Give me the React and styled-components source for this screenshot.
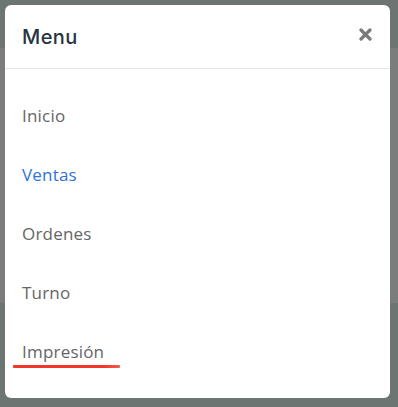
import React from 'react';
import styled, { createGlobalStyle } from 'styled-components';

const GlobalStyle = createGlobalStyle`
  html, body {
    margin: 0;
    padding: 0;
  }
  body {
    width: 398px;
    height: 407px;
    overflow: hidden;
    font-family: "Open Sans", "Noto Sans", sans-serif;
    background: #6d7573;
  }
`;

const Backdrop = styled.div`
  position: relative;
  width: 398px;
  height: 407px;
  background: linear-gradient(
    to bottom,
    #6d7573 0,
    #6d7573 48px,
    #7b7c7c 48px,
    #7b7c7c 303px,
    #6d7573 303px
  );
  padding: 5px 8px 0 5px;
  box-sizing: border-box;
`;

const Modal = styled.div`
  width: 385px;
  height: 393px;
  background: #fff;
  border-radius: 6px;
  box-sizing: border-box;
  display: flex;
  flex-direction: column;
  overflow: hidden;
`;

const Header = styled.div`
  height: 64px;
  display: flex;
  align-items: center;
  justify-content: space-between;
  padding: 0 18px 0 17px;
  border-bottom: 1px solid #e3e6ea;
  box-sizing: border-box;
`;

const Title = styled.h5`
  margin: 0;
  font-family: Inter, "Noto Sans", sans-serif;
  font-size: 20px;
  font-weight: 500;
  color: #283443;
  letter-spacing: 0.4px;
`;

const Close = styled.button`
  border: none;
  background: none;
  padding: 0;
  cursor: pointer;
  display: flex;
  margin-top: -4px;
`;

const Nav = styled.ul`
  list-style: none;
  margin: 0;
  padding: 17px 0 0;
`;

const Item = styled.li`
  position: relative;
  height: 59px;
  display: flex;
  align-items: center;
  padding-left: 17px;
  font-size: 17px;
  font-weight: 500;
  letter-spacing: 0.2px;
  color: ${p => (p.$active ? '#2f73d6' : '#656565')};

  ${p =>
    p.$marked &&
    `
    &::after {
      content: '';
      position: absolute;
      left: 8px;
      top: 43px;
      width: 107px;
      height: 3px;
      background: linear-gradient(to right, #f2372a 85%, #f55a4e);
      border-radius: 1px;
    }
  `}
`;

const items = [
  { label: 'Inicio' },
  { label: 'Ventas', active: true },
  { label: 'Ordenes' },
  { label: 'Turno' },
  { label: 'Impresión', marked: true },
];

export default function App() {
  return (
    <>
      <GlobalStyle />
      <Backdrop>
        <Modal>
          <Header>
            <Title>Menu</Title>
            <Close aria-label="Cerrar">
              <svg width="13" height="13" viewBox="0 0 13 13">
                <path d="M2 2 L11 11 M11 2 L2 11" stroke="#7a7a7a" strokeWidth="3.2" strokeLinecap="round" />
              </svg>
            </Close>
          </Header>
          <Nav>
            {items.map(it => (
              <Item key={it.label} $active={it.active} $marked={it.marked}>
                {it.label}
              </Item>
            ))}
          </Nav>
        </Modal>
      </Backdrop>
    </>
  );
}
